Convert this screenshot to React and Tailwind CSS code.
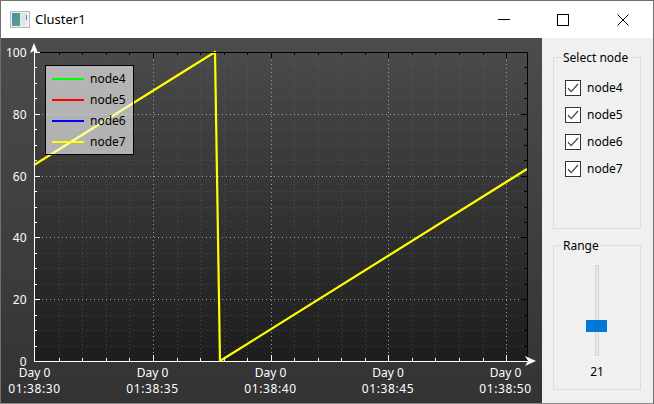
import React from "react";

const FONT = "font-['Noto_Sans','Liberation_Sans',sans-serif]";

const nodes = [
  { name: "node4", color: "bg-[#00ff00]" },
  { name: "node5", color: "bg-[#ff0000]" },
  { name: "node6", color: "bg-[#0000ff]" },
  { name: "node7", color: "bg-[#ffff00]" },
];

// Plot area, in page pixels
const LEFT = 34;
const RIGHT = 527;
const TOP = 52;
const BOTTOM = 361;

const X_STEP = 23.54;
const Y_STEP = (BOTTOM - TOP) / 20;

const xLabels = [
  { x: 34.5, time: "01:38:30" },
  { x: 152.5, time: "01:38:35" },
  { x: 270.5, time: "01:38:40" },
  { x: 388, time: "01:38:45" },
  { x: 505.5, time: "01:38:50" },
];

function gridProps(major) {
  return {
    stroke: major ? "#9c9c9c" : "#6a6a6a",
    strokeDasharray: "1 3",
    opacity: major ? 1 : 0.5,
  };
}

function Chart() {
  const xs = [];
  for (let i = 1; 35.3 + i * X_STEP < RIGHT; i++) {
    xs.push({ x: Math.round(35.3 + i * X_STEP), major: i % 5 === 0 });
  }
  const ys = [];
  for (let i = 0; i <= 20; i++) {
    ys.push({ y: Math.round(BOTTOM - i * Y_STEP), major: i % 4 === 0, value: i * 5 });
  }

  return (
    <svg width="541" height="365" viewBox="1 38 541 365" className="block">
      <defs>
        <linearGradient id="plotBg" x1="0" y1="0" x2="0" y2="1">
          <stop offset="0" stopColor="#4a4a4a" />
          <stop offset="1" stopColor="#1d1d1d" />
        </linearGradient>
      </defs>
      <rect x={LEFT} y={TOP} width={RIGHT - LEFT} height={BOTTOM - TOP} fill="url(#plotBg)" />

      {/* grid */}
      {xs.map((t) => (
        <line key={t.x} x1={t.x + 0.5} x2={t.x + 0.5} y1={TOP} y2={BOTTOM} {...gridProps(t.major)} />
      ))}
      {ys.map((t) => (
        <line key={t.y} x1={LEFT} x2={RIGHT} y1={t.y + 0.5} y2={t.y + 0.5} {...gridProps(t.major)} />
      ))}

      {/* series */}
      <polyline
        points="34,165 215,52 220,361 527,169"
        fill="none"
        stroke="#ffff00"
        strokeWidth="2.2"
        strokeLinejoin="round"
      />

      {/* top and right axes */}
      <line x1={LEFT} x2={RIGHT + 1} y1={TOP + 0.5} y2={TOP + 0.5} stroke="#000" />
      <line x1={RIGHT + 0.5} x2={RIGHT + 0.5} y1={TOP} y2={BOTTOM} stroke="#000" />
      {xs.map((t) => (
        <line key={t.x} x1={t.x + 0.5} x2={t.x + 0.5} y1={TOP} y2={TOP + (t.major ? 6 : 3)} stroke="#000" />
      ))}
      {ys.map((t) => (
        <line key={t.y} x1={RIGHT} x2={RIGHT - (t.major ? 6 : 3)} y1={t.y + 0.5} y2={t.y + 0.5} stroke="#000" />
      ))}

      {/* left and bottom axes */}
      <line x1={LEFT + 0.5} x2={LEFT + 0.5} y1={TOP - 4} y2={BOTTOM + 1} stroke="#fff" />
      <line x1={LEFT} x2={RIGHT + 4} y1={BOTTOM + 0.5} y2={BOTTOM + 0.5} stroke="#fff" />
      {xs.map((t) => (
        <line key={t.x} x1={t.x + 0.5} x2={t.x + 0.5} y1={BOTTOM} y2={BOTTOM - (t.major ? 6 : 3)} stroke="#fff" />
      ))}
      {ys.map((t) => (
        <line key={t.y} x1={LEFT} x2={LEFT + (t.major ? 6 : 3)} y1={t.y + 0.5} y2={t.y + 0.5} stroke="#fff" />
      ))}
      <polygon points="34,43 38,53 34,51 30,53" fill="#fff" />
      <polygon points="536,361 525,356 528,361 525,366" fill="#fff" />

      {/* axis labels */}
      <g fill="#fff" fontSize="12">
        {ys
          .filter((t) => t.major)
          .map((t) => (
            <text key={t.y} x="26.5" y={t.y + 5} textAnchor="end">
              {t.value}
            </text>
          ))}
        {xLabels.map((l) => (
          <g key={l.x} textAnchor="middle">
            <text x={l.x} y="376.5">Day 0</text>
            <text x={l.x} y="392.5" letterSpacing="0.6">{l.time}</text>
          </g>
        ))}
      </g>
    </svg>
  );
}

function Legend() {
  return (
    <div className="absolute left-[44px] top-[27px] flex h-[90px] w-[89px] flex-col justify-center border border-black bg-white/60 pl-[6px]">
      {nodes.map((n) => (
        <div key={n.name} className="flex h-[21px] items-center gap-[6px] text-[12px] text-black">
          <span className={`h-[2px] w-[32px] ${n.color}`} />
          <span>{n.name}</span>
        </div>
      ))}
    </div>
  );
}

function Check({ label }) {
  return (
    <label className="flex h-[16px] items-center gap-[6px] text-[12px] text-black">
      <span className="flex h-[16px] w-[16px] items-center justify-center border border-[#333] bg-white">
        <svg width="12" height="10" viewBox="0 0 12 10" fill="none" stroke="#474747" strokeWidth="1.3">
          <path d="M1 5.2 4.2 8.6 11 1" />
        </svg>
      </span>
      {label}
    </label>
  );
}

function TitleBar() {
  return (
    <div className="flex h-[37px] items-center bg-white text-[12px] text-black">
      <svg width="20" height="17" viewBox="0 0 20 17" className="ml-[9px]">
        <defs>
          <linearGradient id="appIcon" x1="0" y1="0" x2="1" y2="1">
            <stop offset="0" stopColor="#4a86ad" />
            <stop offset="1" stopColor="#5fa57f" />
          </linearGradient>
        </defs>
        <rect x="0.5" y="0.5" width="19" height="16" fill="#f1f1f1" stroke="#b8b8b8" />
        <rect x="2" y="2" width="8" height="13" fill="url(#appIcon)" />
        <rect x="10" y="2" width="6" height="13" fill="#dfe6e6" />
        <rect x="16" y="4" width="1" height="5" fill="#4a8fa5" />
      </svg>
      <span className="ml-[5px] text-[13px]">Cluster1</span>
      <div className="ml-auto flex h-full items-center">
        <div className="flex h-full w-[58px] items-center justify-center">
          <span className="h-px w-[12px] bg-black" />
        </div>
        <div className="flex h-full w-[60px] items-center justify-center">
          <span className="h-[12px] w-[12px] border border-black" />
        </div>
        <div className="flex h-full w-[60px] items-center justify-center">
          <svg width="12" height="12" viewBox="0 0 12 12" stroke="#000" strokeWidth="1">
            <path d="M0.5 0.5 11.5 11.5M11.5 0.5 0.5 11.5" />
          </svg>
        </div>
      </div>
    </div>
  );
}

export default function App() {
  return (
    <div className={`flex h-[404px] w-[654px] flex-col border border-b-[#8a8a8a] border-[#6f6f6f] bg-[#f0f0f0] ${FONT}`}>
      <TitleBar />
      <div className="flex flex-1">
        <div className="relative h-[365px] w-[541px] bg-gradient-to-b from-[#4c4c4c] to-[#333333]">
          <Chart />
          <Legend />
        </div>

        <div className="flex w-[111px] flex-col gap-[8px] pl-[11px] pr-[12px] pt-[11px] text-[12px] text-black">
          <fieldset className="h-[180px] border border-[#dcdcdc]">
            <legend className="ml-[7px] px-[2px] text-[12px] leading-[16px]">
              <span className="block translate-y-px">Select node</span>
            </legend>
            <div className="flex flex-col gap-[11px] pl-[11px] pt-[15px]">
              {nodes.map((n) => (
                <Check key={n.name} label={n.name} />
              ))}
            </div>
          </fieldset>

          <fieldset className="h-[153px] border border-[#dcdcdc]">
            <legend className="ml-[7px] px-[2px] text-[12px] leading-[16px]">
              <span className="block translate-y-px">Range</span>
            </legend>
            <div className="flex flex-col items-center pt-[12px]">
              <div className="relative h-[91px] w-[4px] border border-[#d4d4d4] bg-[#e7e7e7]">
                <span className="absolute left-[-10px] top-[54px] h-[12px] w-[21px] bg-[#0078d7]" />
              </div>
              <span className="mt-[8px] leading-[16px]">21</span>
            </div>
          </fieldset>
        </div>
      </div>
    </div>
  );
}
